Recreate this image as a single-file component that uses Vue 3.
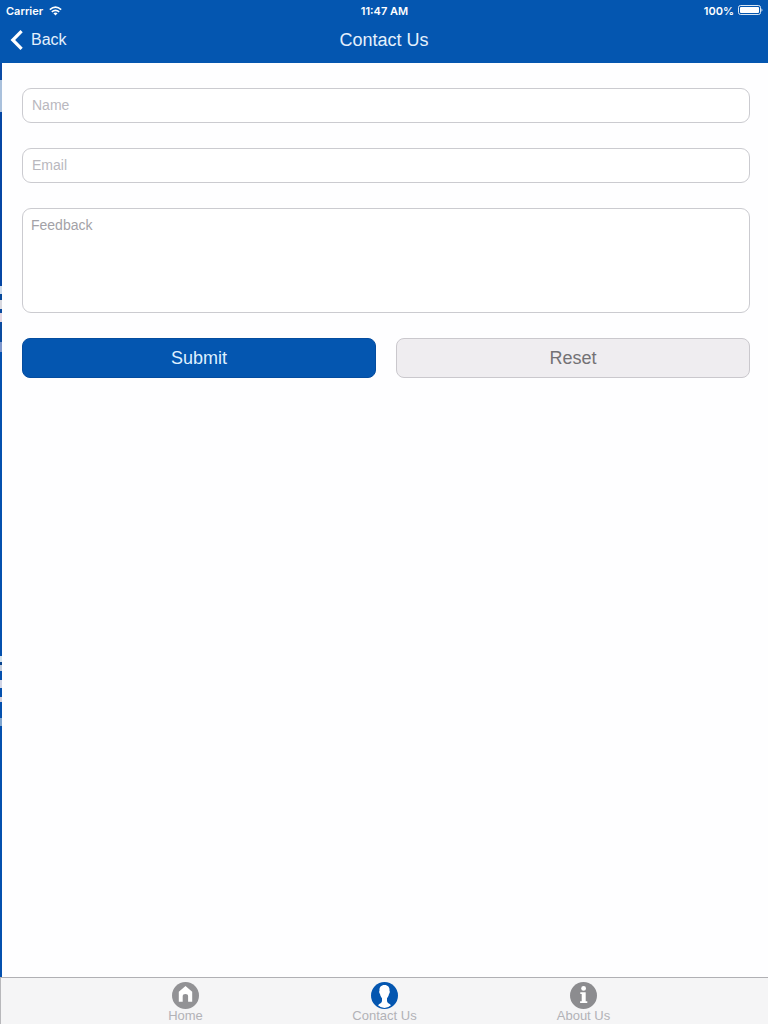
<script setup>
import { ref } from 'vue'

const name = ref('')
const email = ref('')
const feedback = ref('')

function reset() {
  name.value = ''
  email.value = ''
  feedback.value = ''
}
</script>

<template>
  <div class="app">
    <header class="header">
      <div class="status">
        <div class="carrier">
          <span>Carrier</span>
          <svg width="13" height="10" viewBox="0 0 13 10" fill="none" stroke="#fff" stroke-width="1.6">
            <path d="M0.8 3.6Q6.5 -1.2 12.2 3.6" />
            <path d="M2.8 5.9Q6.5 2.7 10.2 5.9" />
            <path d="M4.4 7.2Q6.5 5.6 8.6 7.2L6.5 9.4Z" fill="#fff" stroke="none" />
          </svg>
        </div>
        <time class="time">11:47 AM</time>
        <div class="battery">
          <span>100%</span>
          <svg width="25" height="10" viewBox="0 0 25 10">
            <rect x="0.5" y="0.5" width="22" height="9" rx="2" fill="none" stroke="#fff" stroke-opacity="0.85" />
            <rect x="2" y="2" width="19" height="6" rx="1" fill="#fff" />
            <path d="M23.5 3.2Q25.4 5 23.5 6.8Z" fill="#fff" />
          </svg>
        </div>
      </div>
      <nav class="navbar">
        <button class="back" type="button">
          <svg width="13" height="20" viewBox="0 0 13 20" fill="none" stroke="#fff" stroke-width="3.2">
            <path d="M11.6 1.2L2.8 10L11.6 18.8" />
          </svg>
          <span>Back</span>
        </button>
        <h1 class="title">Contact Us</h1>
      </nav>
    </header>

    <div class="body">
      <div class="edge"></div>
      <main class="panel">
        <form class="form" @submit.prevent @reset.prevent="reset">
          <input v-model="name" class="field" type="text" placeholder="Name" aria-label="Name" />
          <input v-model="email" class="field" type="email" placeholder="Email" aria-label="Email" />
          <textarea v-model="feedback" class="field area" placeholder="Feedback" aria-label="Feedback"></textarea>
          <div class="actions">
            <button class="btn primary" type="submit">Submit</button>
            <button class="btn" type="reset">Reset</button>
          </div>
        </form>
      </main>
    </div>

    <nav class="tabs">
      <a class="tab" href="#home">
        <svg width="27" height="27" viewBox="0 0 27 27">
          <circle cx="13.5" cy="13.5" r="13.5" fill="#929295" />
          <path d="M13.5 4L6.8 9.8V19.8H10.7V14.2Q10.7 12 13.4 12Q16.1 12 16.1 14.2V19.8H20.2V9.8Z" fill="#fff" />
        </svg>
        <span>Home</span>
      </a>
      <a class="tab" href="#contact" aria-current="page">
        <svg width="27" height="27" viewBox="0 0 27 27">
          <circle cx="13.5" cy="13.5" r="13.5" fill="#0456b0" />
          <path d="M13.5 3C10 3 8.2 5.2 8.5 8.8C7.9 9.2 8.2 11.6 9 12C9.4 14 10.3 15.4 11 16.2V19C11 21 8.6 21.4 7 23.2Q9.8 25.9 13.5 25.9Q17.2 25.9 20 23.2C18.4 21.4 16 21 16 19V16.2C16.7 15.4 17.6 14 18 12C18.8 11.6 19.1 9.2 18.5 8.8C18.8 5.2 17 3 13.5 3Z" fill="#fff" />
        </svg>
        <span>Contact Us</span>
      </a>
      <a class="tab" href="#about">
        <svg width="27" height="27" viewBox="0 0 27 27">
          <circle cx="13.5" cy="13.5" r="13.5" fill="#8c8c8f" />
          <circle cx="13.6" cy="6.4" r="2.4" fill="#fff" />
          <path d="M10.3 10.2H15.7V19.2H17.3V21H10.1V19.2H11.7V12H10.3Z" fill="#fff" />
        </svg>
        <span>About Us</span>
      </a>
    </nav>
  </div>
</template>

<style>
body {
  margin: 0;
}
</style>

<style scoped>
.app {
  min-height: 100vh;
  display: flex;
  flex-direction: column;
  background: #fefeff;
  font-family: "Liberation Sans", Arial, sans-serif;
}
.app * {
  box-sizing: border-box;
}
svg {
  display: block;
  flex: none;
}
.header {
  height: 63px;
  background: #0456b0;
  color: #fff;
}
.status {
  height: 22px;
  padding: 0 5px 0 6px;
  display: grid;
  grid-template-columns: 1fr auto 1fr;
  align-items: center;
  font: 600 11px/22px Inter, sans-serif;
}
.carrier,
.battery {
  display: flex;
  align-items: center;
  gap: 6px;
}
.battery {
  justify-content: flex-end;
  gap: 4px;
}
.battery svg {
  margin-bottom: 2px;
}
.navbar {
  height: 36px;
  padding: 0 10px;
  display: grid;
  grid-template-columns: 1fr auto 1fr;
  align-items: center;
}
.back {
  justify-self: start;
  display: flex;
  align-items: center;
  gap: 8px;
  padding: 0;
  border: 0;
  background: none;
  color: #e4f0fc;
  font: 16px/20px "Liberation Sans", Arial, sans-serif;
}
.title {
  margin: 0;
  color: #e4f0fc;
  font-size: 18px;
  line-height: 24px;
  font-weight: 400;
}
.body {
  flex: 1;
  display: flex;
}
.edge {
  width: 2px;
  background: linear-gradient(
    #0b4ba6 17px, #a9c0dc 17px, #a9c0dc 49px, #0546a4 49px,
    #0546a4 223px, #cfdcec 223px, #cfdcec 231px, #06489a 231px,
    #06489a 237px, #d9d9e0 237px, #d9d9e0 246px, #0b4ba0 246px,
    #0b4ba0 250px, #e3d6e2 250px, #e3d6e2 259px, #0b4ba0 259px,
    #0b4ba0 279px, #7d96cc 279px, #7d96cc 289px, #0450ae 289px,
    #0450ae 593px, #d3e3ee 593px, #d3e3ee 599px, #0a4590 599px,
    #0a4590 602px, #c3cddd 602px, #c3cddd 608px, #0450ae 608px,
    #0450ae 617px, #d3d6e6 617px, #d3d6e6 625px, #0450ae 625px,
    #0450ae 634px, #d3d0dc 634px, #d3d0dc 639px, #0450ae 639px,
    #0450ae 655px, #7fa5cf 655px, #7fa5cf 663px, #0450ae 663px
  );
}
.panel {
  flex: 1;
  padding: 25px 18px 25px 20px;
}
.form {
  display: flex;
  flex-direction: column;
  gap: 25px;
}
.field {
  display: block;
  width: 100%;
  height: 35px;
  margin: 0;
  padding: 0 9px 2px;
  border: 1px solid #cbcbd0;
  border-radius: 9px;
  outline: 0;
  background: #fff;
  color: #555;
  font: 14px/18px "Liberation Sans", Arial, sans-serif;
}
.area {
  height: 105px;
  padding: 7px 8px;
  resize: none;
}
.field::placeholder {
  color: #b9b8be;
  opacity: 1;
}
.area::placeholder {
  color: #a3a2a7;
}
.actions {
  display: grid;
  grid-template-columns: 1fr 1fr;
  gap: 20px;
}
.btn {
  height: 40px;
  padding: 0;
  border: 1px solid #cac8cd;
  border-radius: 8px;
  background: #efedf0;
  color: #737275;
  font: 18px/24px "Liberation Sans", Arial, sans-serif;
}
.primary {
  border-color: #044c9f;
  background: #0456b0;
  color: #dff0ff;
}
.tabs {
  height: 47px;
  padding-top: 4px;
  display: flex;
  justify-content: center;
  border-top: 1px solid #b0b0b4;
  border-left: 1px solid #b8b8bb;
  background: #f5f5f6;
}
.tab {
  flex: 0 1 199px;
  display: flex;
  flex-direction: column;
  align-items: center;
  color: #b2b2b6;
  font-size: 13px;
  line-height: 13px;
  text-decoration: none;
}
</style>
